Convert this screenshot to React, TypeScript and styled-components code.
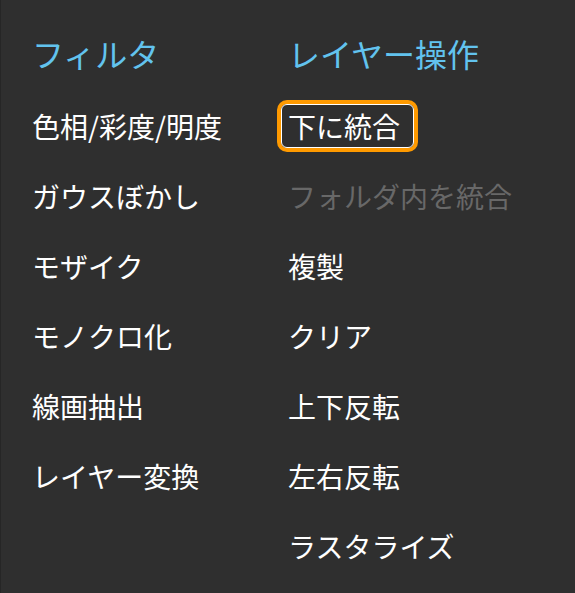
import React from "react";
import styled, { createGlobalStyle } from "styled-components";

const GlobalStyle = createGlobalStyle`
  html, body {
    margin: 0;
    padding: 0;
    background: #2f2f2f;
  }
  body {
    font-family: "Noto Sans CJK JP", "Noto Sans", sans-serif;
  }
`;

const MenuPanel = styled.div`
  box-sizing: border-box;
  width: 575px;
  height: 593px;
  background: #2f2f2f;
  border-left: 1px solid #262626;
  padding: 33px 0 0 24px;
  display: grid;
  grid-template-columns: 256px 1fr;
  align-items: start;
`;

const Column = styled.div`
  display: flex;
  flex-direction: column;
  align-items: flex-start;
  gap: 26px;
`;

const Heading = styled.div`
  color: #62c3ee;
  font-size: 32px;
  line-height: 40px;
  padding-left: 7px;
  margin-bottom: 5px;
  white-space: nowrap;
`;

interface IMenuItem {
  disabled?: boolean;
  focused?: boolean;
}
const MenuItem = styled.div<IMenuItem>`
  box-sizing: border-box;
  height: 44px;
  line-height: 42px;
  padding: 0 13px 0 6px;
  font-size: 28px;
  white-space: nowrap;
  color: ${(props) => (props.disabled ? "#686868" : "#ffffff")};
  border: 1px solid ${(props) => (props.focused ? "#ffffff" : "transparent")};
  border-radius: 6px;
  box-shadow: ${(props) => (props.focused ? "0 0 0 4px #ff9a00" : "none")};
`;

const filters = ["色相/彩度/明度", "ガウスぼかし", "モザイク", "モノクロ化", "線画抽出", "レイヤー変換"];

const layerOps = [
  { label: "下に統合", focused: true },
  { label: "フォルダ内を統合", disabled: true },
  { label: "複製" },
  { label: "クリア" },
  { label: "上下反転" },
  { label: "左右反転" },
  { label: "ラスタライズ" },
];

export default function App() {
  return (
    <>
      <GlobalStyle />
      <MenuPanel>
        <Column>
          <Heading>フィルタ</Heading>
          {filters.map((f) => (
            <MenuItem key={f}>{f}</MenuItem>
          ))}
        </Column>
        <Column>
          <Heading>レイヤー操作</Heading>
          {layerOps.map((op) => (
            <MenuItem key={op.label} focused={op.focused} disabled={op.disabled}>
              {op.label}
            </MenuItem>
          ))}
        </Column>
      </MenuPanel>
    </>
  );
}
